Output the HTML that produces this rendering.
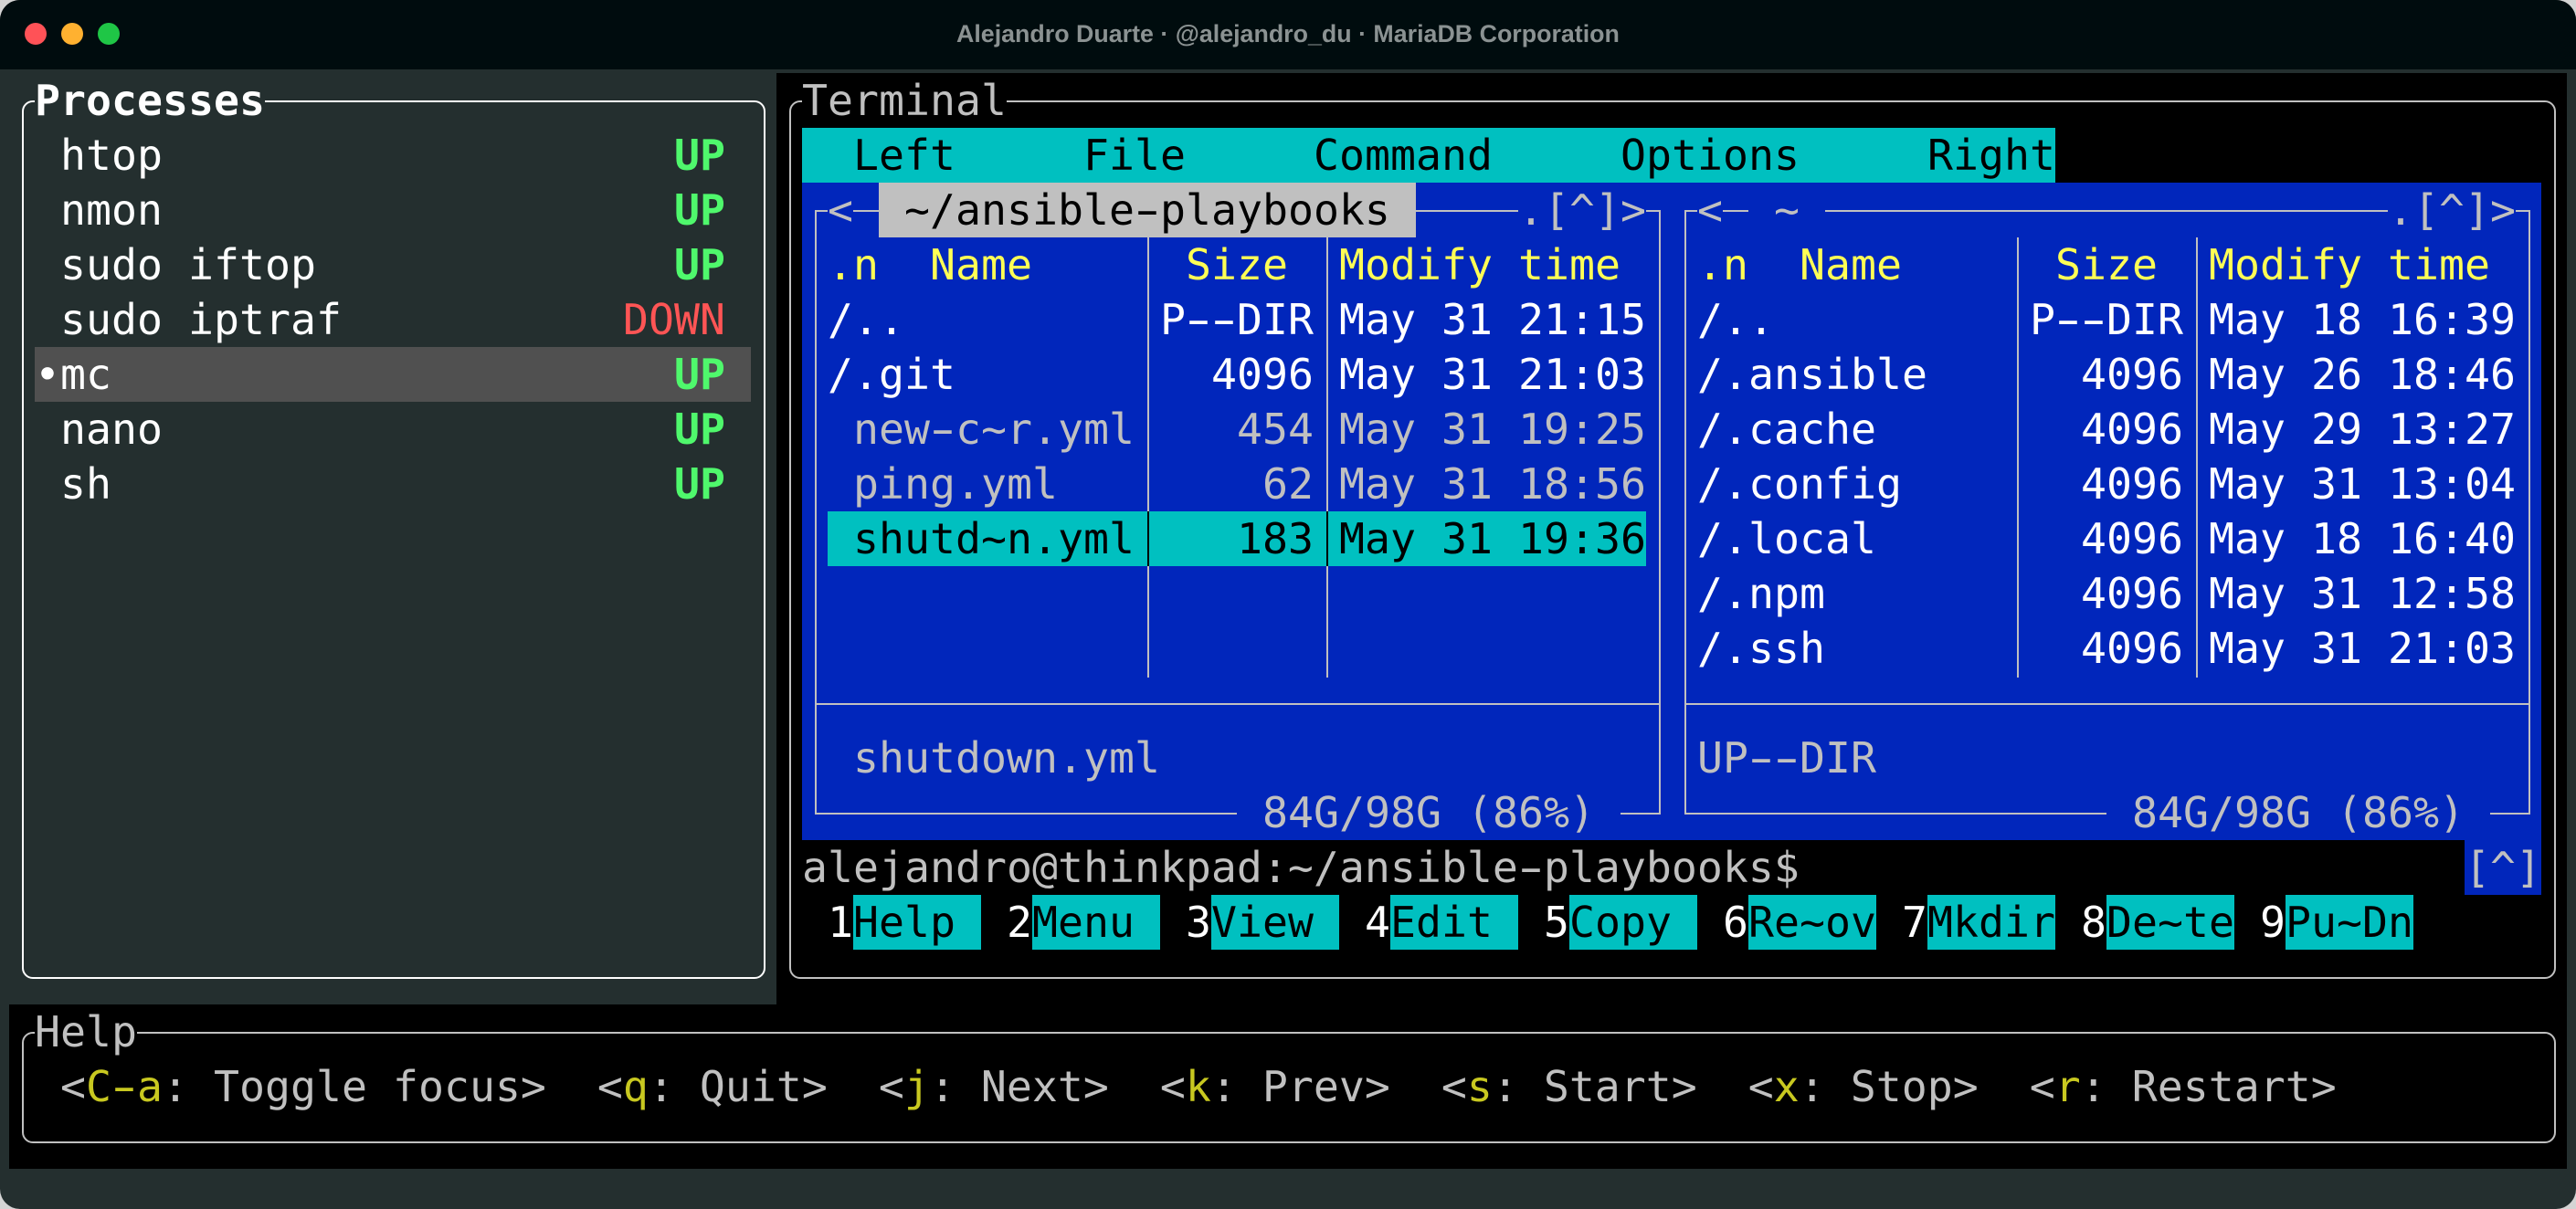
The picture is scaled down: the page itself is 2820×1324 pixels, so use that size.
<!DOCTYPE html>
<html><head><meta charset="utf-8"><style>
html,body{margin:0;padding:0;background:#d4d4d4;width:2820px;height:1324px;overflow:hidden}
#w{position:absolute;left:0;top:0;width:2820px;height:1324px;background:#242f2f;border-radius:22px;overflow:hidden;font-family:"DejaVu Sans Mono",monospace;font-size:46.5px;line-height:60px;color:#c0c0c0}
#tb{position:absolute;left:0;top:0;width:2820px;height:76px;background:#000c0e}
.d{position:absolute;top:25px;width:24px;height:24px;border-radius:50%}
#tt{position:absolute;left:1047px;top:17px;width:725px;text-align:center;font:bold 26.8px/40px "Liberation Sans",sans-serif;color:#8b9292;white-space:nowrap}
.k{position:absolute;background:#000}
.f{position:absolute}
.t{position:absolute;left:calc(10px + 28px*var(--c));top:calc(80px + 60px*var(--r));height:60px;white-space:pre}
.h,.v{position:absolute;background:#c0c0c0}
.h{height:2px}.v{width:2px}
.b{position:absolute;border:2px solid #c0c0c0;border-radius:12px;box-sizing:border-box}
.W{color:#fff}.G{color:#4ff86c;font-weight:bold}.R{color:#ff5555}.Y{color:#ffff55}.D{color:#c8c820}.K{color:#000}
.c{background:#00c0c0}.u{background:#0126bb}
i{font-style:normal}
.m{display:inline-block;transform:scaleX(1.65)}
</style></head><body><div id="w">
<div id="tb"></div>
<div class="d" style="left:27px;background:#ff5257"></div>
<div class="d" style="left:67px;background:#ffb130"></div>
<div class="d" style="left:107px;background:#1fc646"></div>
<div id="tt">Alejandro Duarte · @alejandro_du · MariaDB Corporation</div>

<!-- black panes -->
<div class="k" style="left:850px;top:80px;width:1960px;height:1020px"></div>
<div class="k" style="left:10px;top:1100px;width:2800px;height:180px"></div>

<!-- Processes -->
<div class="b" style="left:24px;top:110px;width:814px;height:962px;border-color:#fff"></div>
<span class="t W" style="--c:1;--r:0;background:#242f2f;font-weight:bold">Processes</span>
<div class="f" style="left:38px;top:380px;width:784px;height:60px;background:#505050"></div>
<span class="t W" style="--c:2;--r:1">htop</span><span class="t G" style="--c:26;--r:1">UP</span>
<span class="t W" style="--c:2;--r:2">nmon</span><span class="t G" style="--c:26;--r:2">UP</span>
<span class="t W" style="--c:2;--r:3">sudo iftop</span><span class="t G" style="--c:26;--r:3">UP</span>
<span class="t W" style="--c:2;--r:4">sudo iptraf</span><span class="t R" style="--c:24;--r:4">DOWN</span>
<span class="t W" style="--c:1;--r:5">•</span><span class="t W" style="--c:2;--r:5">mc</span><span class="t G" style="--c:26;--r:5">UP</span>
<span class="t W" style="--c:2;--r:6">nano</span><span class="t G" style="--c:26;--r:6">UP</span>
<span class="t W" style="--c:2;--r:7">sh</span><span class="t G" style="--c:26;--r:7">UP</span>

<!-- Terminal frame -->
<div class="b" style="left:864px;top:110px;width:1934px;height:962px"></div>
<span class="t" style="--c:31;--r:0;background:#000">Terminal</span>

<!-- menu -->
<div class="f c" style="left:878px;top:140px;width:1372px;height:60px"></div>
<span class="t K" style="--c:33;--r:1">Left</span>
<span class="t K" style="--c:42;--r:1">File</span>
<span class="t K" style="--c:51;--r:1">Command</span>
<span class="t K" style="--c:63;--r:1">Options</span>
<span class="t K" style="--c:75;--r:1">Right</span>

<!-- blue -->
<div class="f u" style="left:878px;top:200px;width:1904px;height:720px"></div>

<!-- left mc frame -->
<div class="h" style="left:892px;top:230px;width:14px"></div>
<div class="h" style="left:934px;top:230px;width:28px"></div>
<div class="h" style="left:1550px;top:230px;width:112px"></div>
<div class="h" style="left:1802px;top:230px;width:16px"></div>
<div class="h" style="left:892px;top:890px;width:462px"></div>
<div class="h" style="left:1774px;top:890px;width:44px"></div>
<div class="h" style="left:892px;top:770px;width:926px"></div>
<div class="v" style="left:892px;top:230px;height:662px"></div>
<div class="v" style="left:1816px;top:230px;height:662px"></div>
<div class="v" style="left:1256px;top:260px;height:482px"></div>
<div class="v" style="left:1452px;top:260px;height:482px"></div>

<!-- right mc frame -->
<div class="h" style="left:1844px;top:230px;width:14px"></div>
<div class="h" style="left:1886px;top:230px;width:28px"></div>
<div class="h" style="left:1998px;top:230px;width:616px"></div>
<div class="h" style="left:2754px;top:230px;width:16px"></div>
<div class="h" style="left:1844px;top:890px;width:462px"></div>
<div class="h" style="left:2726px;top:890px;width:44px"></div>
<div class="h" style="left:1844px;top:770px;width:926px"></div>
<div class="v" style="left:1844px;top:230px;height:662px"></div>
<div class="v" style="left:2768px;top:230px;height:662px"></div>
<div class="v" style="left:2208px;top:260px;height:482px"></div>
<div class="v" style="left:2404px;top:260px;height:482px"></div>

<!-- selection -->
<div class="f c" style="left:906px;top:560px;width:896px;height:60px"></div>
<div class="v" style="left:1256px;top:560px;height:60px;background:#000"></div>
<div class="v" style="left:1452px;top:560px;height:60px;background:#000"></div>

<!-- left mc header -->
<span class="t" style="--c:32;--r:2">&lt;</span>
<span class="t K" style="--c:34;--r:2;background:#c0c0c0"> ~/ansible<i class="m">-</i>playbooks </span>
<span class="t" style="--c:59;--r:2">.[^]&gt;</span>
<span class="t Y" style="--c:32;--r:3">.n</span><span class="t Y" style="--c:36;--r:3">Name</span><span class="t Y" style="--c:46;--r:3">Size</span><span class="t Y" style="--c:52;--r:3">Modify time</span>
<span class="t W" style="--c:32;--r:4">/..</span><span class="t W" style="--c:45;--r:4">P<i class="m">-</i><i class="m">-</i>DIR</span><span class="t W" style="--c:52;--r:4">May 31 21:15</span>
<span class="t W" style="--c:32;--r:5">/.git</span><span class="t W" style="--c:47;--r:5">4096</span><span class="t W" style="--c:52;--r:5">May 31 21:03</span>
<span class="t" style="--c:33;--r:6">new<i class="m">-</i>c~r.yml</span><span class="t" style="--c:48;--r:6">454</span><span class="t" style="--c:52;--r:6">May 31 19:25</span>
<span class="t" style="--c:33;--r:7">ping.yml</span><span class="t" style="--c:49;--r:7">62</span><span class="t" style="--c:52;--r:7">May 31 18:56</span>
<span class="t K" style="--c:33;--r:8">shutd~n.yml</span><span class="t K" style="--c:48;--r:8">183</span><span class="t K" style="--c:52;--r:8">May 31 19:36</span>
<span class="t" style="--c:33;--r:12">shutdown.yml</span>
<span class="t" style="--c:49;--r:13">84G/98G (86%)</span>

<!-- right mc -->
<span class="t" style="--c:66;--r:2">&lt;</span>
<span class="t" style="--c:69;--r:2">~</span>
<span class="t" style="--c:93;--r:2">.[^]&gt;</span>
<span class="t Y" style="--c:66;--r:3">.n</span><span class="t Y" style="--c:70;--r:3">Name</span><span class="t Y" style="--c:80;--r:3">Size</span><span class="t Y" style="--c:86;--r:3">Modify time</span>
<span class="t W" style="--c:66;--r:4">/..</span><span class="t W" style="--c:79;--r:4">P<i class="m">-</i><i class="m">-</i>DIR</span><span class="t W" style="--c:86;--r:4">May 18 16:39</span>
<span class="t W" style="--c:66;--r:5">/.ansible</span><span class="t W" style="--c:81;--r:5">4096</span><span class="t W" style="--c:86;--r:5">May 26 18:46</span>
<span class="t W" style="--c:66;--r:6">/.cache</span><span class="t W" style="--c:81;--r:6">4096</span><span class="t W" style="--c:86;--r:6">May 29 13:27</span>
<span class="t W" style="--c:66;--r:7">/.config</span><span class="t W" style="--c:81;--r:7">4096</span><span class="t W" style="--c:86;--r:7">May 31 13:04</span>
<span class="t W" style="--c:66;--r:8">/.local</span><span class="t W" style="--c:81;--r:8">4096</span><span class="t W" style="--c:86;--r:8">May 18 16:40</span>
<span class="t W" style="--c:66;--r:9">/.npm</span><span class="t W" style="--c:81;--r:9">4096</span><span class="t W" style="--c:86;--r:9">May 31 12:58</span>
<span class="t W" style="--c:66;--r:10">/.ssh</span><span class="t W" style="--c:81;--r:10">4096</span><span class="t W" style="--c:86;--r:10">May 31 21:03</span>
<span class="t" style="--c:66;--r:12">UP<i class="m">-</i><i class="m">-</i>DIR</span>
<span class="t" style="--c:83;--r:13">84G/98G (86%)</span>

<!-- prompt -->
<span class="t" style="--c:31;--r:14">alejandro@thinkpad:~/ansible<i class="m">-</i>playbooks$</span>
<span class="t u" style="--c:96;--r:14">[^]</span>

<!-- fn keys -->
<span class="t W" style="--c:32;--r:15">1</span><span class="t K c" style="--c:33;--r:15">Help </span>
<span class="t W" style="--c:39;--r:15">2</span><span class="t K c" style="--c:40;--r:15">Menu </span>
<span class="t W" style="--c:46;--r:15">3</span><span class="t K c" style="--c:47;--r:15">View </span>
<span class="t W" style="--c:53;--r:15">4</span><span class="t K c" style="--c:54;--r:15">Edit </span>
<span class="t W" style="--c:60;--r:15">5</span><span class="t K c" style="--c:61;--r:15">Copy </span>
<span class="t W" style="--c:67;--r:15">6</span><span class="t K c" style="--c:68;--r:15">Re~ov</span>
<span class="t W" style="--c:74;--r:15">7</span><span class="t K c" style="--c:75;--r:15">Mkdir</span>
<span class="t W" style="--c:81;--r:15">8</span><span class="t K c" style="--c:82;--r:15">De~te</span>
<span class="t W" style="--c:88;--r:15">9</span><span class="t K c" style="--c:89;--r:15">Pu~Dn</span>

<!-- help -->
<div class="b" style="left:24px;top:1130px;width:2774px;height:122px"></div>
<span class="t" style="--c:1;--r:17;background:#000">Help</span>
<span class="t" style="--c:2;--r:18">&lt;<i class="D">C<i class="m">-</i>a</i>: Toggle focus&gt;  &lt;<i class="D">q</i>: Quit&gt;  &lt;<i class="D">j</i>: Next&gt;  &lt;<i class="D">k</i>: Prev&gt;  &lt;<i class="D">s</i>: Start&gt;  &lt;<i class="D">x</i>: Stop&gt;  &lt;<i class="D">r</i>: Restart&gt;</span>
</div></body></html>
